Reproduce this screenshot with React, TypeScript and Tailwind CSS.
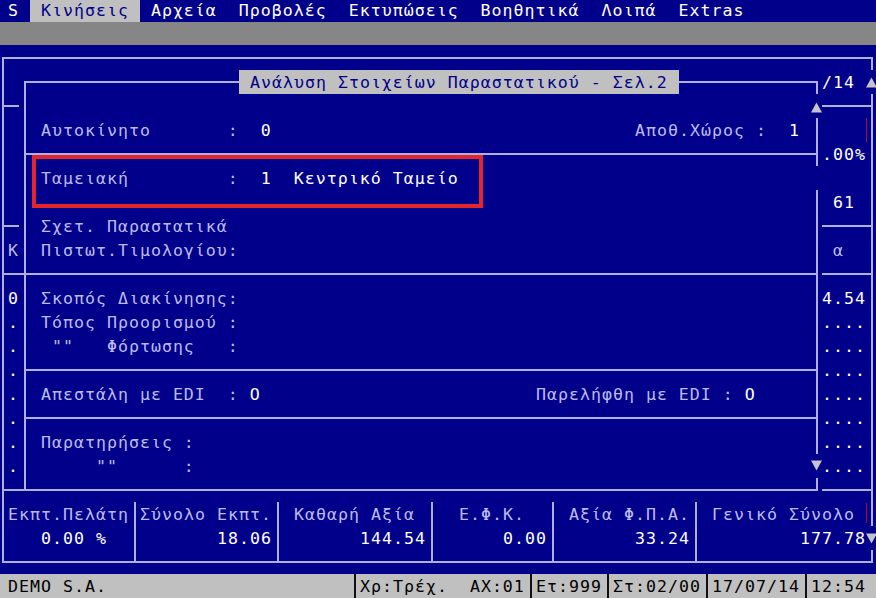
import React from "react";

// Text-mode screen: every cell is 11px wide and 24px tall.
const Up = () => (
  <svg width="12" height="11" viewBox="0 0 12 11">
    <path d="M6 0L12 11H0Z" fill="#c4c4cc" />
  </svg>
);

const Down = () => (
  <svg width="12" height="11" viewBox="0 0 12 11">
    <path d="M0 0H12L6 11Z" fill="#c4c4cc" />
  </svg>
);

const App: React.FC = () => {
  return (
    <div className="w-[876px] h-[598px] overflow-hidden bg-[#00008a] font-['DejaVu_Sans_Mono',monospace] text-[16.6px] tracking-[1px] flex flex-col">
      {/* Menu */}
      <div className="h-[22px] leading-[22px] pl-[8px] text-white whitespace-pre">
        S{" "}
        <span className="inline-block bg-[#c0c0c0] text-[#00008a]"> Κινήσεις </span>
        {" Αρχεία  Προβολές  Εκτυπώσεις  Βοηθητικά  Λοιπά  Extras"}
      </div>
      <div className="h-[23px] bg-[#868686]" />

      {/* Desktop */}
      <div className="h-[529px] pt-[1px] overflow-hidden">
        <div className="grid grid-cols-[8px_repeat(79,11px)] grid-rows-[repeat(22,24px)] whitespace-pre leading-[26px]">
          {/* background window */}
          <div className="col-start-1 col-end-81 row-start-1 row-end-23 ml-[2px] mr-[4px] mt-[11px] mb-[11px] border-2 border-[#b0b0e0]" />
          <div className="col-start-1 col-span-2 row-start-3 ml-[2px] mt-[11px] h-[2px] self-start bg-[#b0b0e0]" />
          <div className="col-start-1 col-span-2 row-start-8 ml-[2px] mt-[11px] h-[2px] self-start bg-[#b0b0e0]" />
          <div className="col-start-1 col-span-3 row-start-10 ml-[2px] mr-[5px] mt-[11px] h-[2px] self-start bg-[#b0b0e0]" />
          <div className="col-start-1 col-span-3 row-start-19 ml-[2px] mr-[5px] mt-[11px] h-[2px] self-start bg-[#b0b0e0]" />
          <div className="col-start-76 col-span-5 row-start-3 mr-[4px] mt-[11px] h-[2px] self-start bg-[#b0b0e0]" />
          <div className="col-start-76 col-span-5 row-start-8 mr-[4px] mt-[11px] h-[2px] self-start bg-[#b0b0e0]" />
          <div className="col-start-76 col-span-5 row-start-10 mr-[4px] mt-[11px] h-[2px] self-start bg-[#b0b0e0]" />
          <div className="col-start-76 col-span-5 row-start-19 mr-[4px] mt-[11px] h-[2px] self-start bg-[#b0b0e0]" />

          <div className="col-start-2 row-start-9 text-[#bcbcf0]">K</div>
          <div className="col-start-2 row-start-11 text-white">0</div>
          <div className="col-start-2 row-start-12 text-white">.</div>
          <div className="col-start-2 row-start-13 text-white">.</div>
          <div className="col-start-2 row-start-14 text-white">.</div>
          <div className="col-start-2 row-start-15 text-white">.</div>
          <div className="col-start-2 row-start-16 text-white">.</div>
          <div className="col-start-2 row-start-17 text-white">.</div>
          <div className="col-start-2 row-start-18 text-white">.</div>

          <div className="col-start-76 col-span-4 row-start-2 text-white">/14</div>
          <div className="col-start-76 col-span-4 row-start-5 text-white">.00%</div>
          <div className="col-start-77 col-span-2 row-start-7 text-white">61</div>
          <div className="col-start-77 row-start-9 text-[#bcbcf0]">α</div>
          <div className="col-start-76 col-span-4 row-start-11 text-white">4.54</div>
          <div className="col-start-76 col-span-4 row-start-12 text-white">....</div>
          <div className="col-start-76 col-span-4 row-start-13 text-white">....</div>
          <div className="col-start-76 col-span-4 row-start-14 text-white">....</div>
          <div className="col-start-76 col-span-4 row-start-15 text-white">....</div>
          <div className="col-start-76 col-span-4 row-start-16 text-white">....</div>
          <div className="col-start-76 col-span-4 row-start-17 text-white">....</div>
          <div className="col-start-76 col-span-4 row-start-18 text-white">....</div>
          <div className="col-start-80 row-start-4 w-[1px] bg-[#a0102a]" />
          <div className="col-start-80 row-start-20 w-[1px] h-[20px] mt-[1px] self-start bg-[#a0102a]" />

          {/* totals */}
          <div className="col-start-13 row-start-20 row-end-23 w-[2px] ml-[5px] mb-[11px] bg-[#b0b0e0]" />
          <div className="col-start-26 row-start-20 row-end-23 w-[2px] ml-[5px] mb-[11px] bg-[#b0b0e0]" />
          <div className="col-start-40 row-start-20 row-end-23 w-[2px] ml-[5px] mb-[11px] bg-[#b0b0e0]" />
          <div className="col-start-51 row-start-20 row-end-23 w-[2px] ml-[5px] mb-[11px] bg-[#b0b0e0]" />
          <div className="col-start-64 row-start-20 row-end-23 w-[2px] ml-[5px] mb-[11px] bg-[#b0b0e0]" />

          <div className="col-start-2 col-span-11 row-start-20 text-[#bcbcf0]">Εκπτ.Πελάτη</div>
          <div className="col-start-14 col-span-12 row-start-20 text-[#bcbcf0]">Σύνολο Εκπτ.</div>
          <div className="col-start-28 col-span-11 row-start-20 text-[#bcbcf0]">Καθαρή Αξία</div>
          <div className="col-start-43 col-span-6 row-start-20 text-[#bcbcf0]">Ε.Φ.Κ.</div>
          <div className="col-start-53 col-span-11 row-start-20 text-[#bcbcf0]">Αξία Φ.Π.Α.</div>
          <div className="col-start-66 col-span-13 row-start-20 text-[#bcbcf0]">Γενικό Σύνολο</div>

          <div className="col-start-5 col-span-6 row-start-21 text-white">0.00 %</div>
          <div className="col-start-21 col-span-5 row-start-21 text-white">18.06</div>
          <div className="col-start-34 col-span-6 row-start-21 text-white">144.54</div>
          <div className="col-start-47 col-span-4 row-start-21 text-white">0.00</div>
          <div className="col-start-59 col-span-5 row-start-21 text-white">33.24</div>
          <div className="col-start-74 col-span-6 row-start-21 text-white">177.78</div>

          {/* dialog window */}
          <div className="col-start-3 col-end-76 row-start-2 row-end-20 ml-[5px] mr-[4px] mt-[11px] mb-[11px] border-2 border-[#b0b0e0] bg-[#00008a]" />
          <div className="col-start-3 col-end-76 row-start-5 ml-[5px] mr-[4px] mt-[11px] h-[2px] self-start bg-[#b0b0e0]" />
          <div className="col-start-3 col-end-76 row-start-10 ml-[5px] mr-[4px] mt-[11px] h-[2px] self-start bg-[#b0b0e0]" />
          <div className="col-start-3 col-end-76 row-start-14 ml-[5px] mr-[4px] mt-[11px] h-[2px] self-start bg-[#b0b0e0]" />
          <div className="col-start-3 col-end-76 row-start-16 ml-[5px] mr-[4px] mt-[11px] h-[2px] self-start bg-[#b0b0e0]" />

          <div className="col-start-23 col-span-40 row-start-2 bg-[#c0c0c0] text-[#00008a]"> Ανάλυση Στοιχείων Παραστατικού - Σελ.2 </div>

          <div className="col-start-5 col-span-21 row-start-4 text-[#bcbcf0]">
            {"Αυτοκίνητο       :  "}
            <span className="text-white">0</span>
          </div>
          <div className="col-start-59 col-span-15 row-start-4 text-[#bcbcf0]">
            {"Αποθ.Χώρος :  "}
            <span className="text-white">1</span>
          </div>
          <div className="col-start-5 col-span-38 row-start-6 text-[#bcbcf0]">
            {"Ταμειακή         :  "}
            <span className="text-white">1  Κεντρικό Ταμείο</span>
          </div>
          <div className="col-start-5 col-span-18 row-start-8 text-[#bcbcf0]">Σχετ. Παραστατικά</div>
          <div className="col-start-5 col-span-18 row-start-9 text-[#bcbcf0]">Πιστωτ.Τιμολογίου:</div>
          <div className="col-start-5 col-span-18 row-start-11 text-[#bcbcf0]">Σκοπός Διακίνησης:</div>
          <div className="col-start-5 col-span-18 row-start-12 text-[#bcbcf0]">Τόπος Προορισμού :</div>
          <div className="col-start-5 col-span-18 row-start-13 text-[#bcbcf0]">{' ""   Φόρτωσης   :'}</div>
          <div className="col-start-5 col-span-20 row-start-15 text-[#bcbcf0]">
            {"Απεστάλη με EDI  : "}
            <span className="text-white">O</span>
          </div>
          <div className="col-start-50 col-span-20 row-start-15 text-[#bcbcf0]">
            {"Παρελήφθη με EDI : "}
            <span className="text-white">O</span>
          </div>
          <div className="col-start-5 col-span-14 row-start-17 text-[#bcbcf0]">Παρατηρήσεις :</div>
          <div className="col-start-5 col-span-14 row-start-18 text-[#bcbcf0]">{'     ""      :'}</div>

          {/* scroll bars */}
          <div className="col-start-75 row-start-3 bg-[#00008a] flex justify-center items-start pt-[8px]">
            <Up />
          </div>
          <div className="col-start-75 row-start-6 bg-[#00008a]" />
          <div className="col-start-75 row-start-18 bg-[#00008a] flex justify-center items-start pt-[6px]">
            <Down />
          </div>
          <div className="col-start-80 row-start-2 bg-[#00008a] flex justify-center items-start pt-[7px]">
            <Up />
          </div>
          <div className="col-start-80 row-start-21 bg-[#00008a] flex justify-center items-start pt-[7px]">
            <Down />
          </div>

          {/* highlight */}
          <div className="col-start-4 col-end-46 row-start-5 row-end-8 ml-[2px] mr-[9px] mt-[13px] mb-[6px] border-4 border-[#e3262c]" />
        </div>
      </div>

      {/* Status bar */}
      <div className="h-[24px] bg-[#c0c0c0] text-black leading-[26px] whitespace-pre grid grid-cols-[8px_repeat(79,11px)]">
        <div className="col-start-2 col-span-9 row-start-1">DEMO S.A.</div>
        <div className="col-start-33 row-start-1 w-[2px] ml-[5px] bg-[#101010]" />
        <div className="col-start-34 col-span-15 row-start-1">Χρ:Τρέχ.  ΑΧ:01</div>
        <div className="col-start-49 row-start-1 w-[2px] ml-[5px] bg-[#101010]" />
        <div className="col-start-50 col-span-6 row-start-1">Ετ:999</div>
        <div className="col-start-56 row-start-1 w-[2px] ml-[5px] bg-[#101010]" />
        <div className="col-start-57 col-span-8 row-start-1">Στ:02/00</div>
        <div className="col-start-65 row-start-1 w-[2px] ml-[5px] bg-[#101010]" />
        <div className="col-start-66 col-span-8 row-start-1">17/07/14</div>
        <div className="col-start-74 row-start-1 w-[2px] ml-[5px] bg-[#101010]" />
        <div className="col-start-75 col-span-5 row-start-1">12:54</div>
      </div>
    </div>
  );
};

export default App;
